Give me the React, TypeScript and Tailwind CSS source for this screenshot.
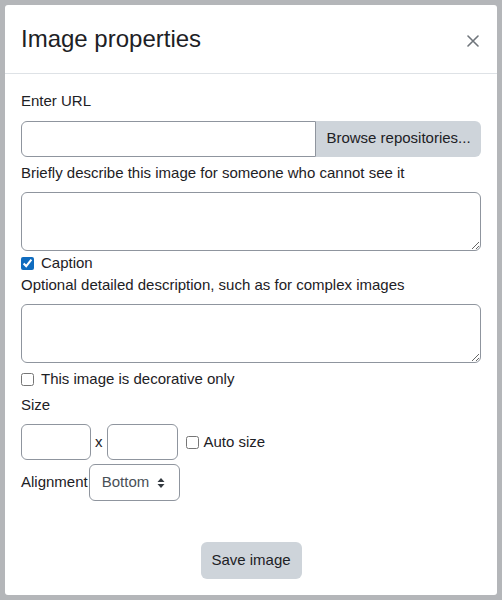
import React from "react";

export default function App() {
  return (
    <div
      className="w-[502px] h-[600px] bg-[#b4b6b9] p-[5px] overflow-hidden"
      style={{ fontFamily: '"Liberation Sans", Arial, sans-serif' }}
    >
      <div className="w-[492px] h-[590px] bg-white rounded-[3px] flex flex-col text-[#1d2125] text-[15px] leading-[22.5px]">
        {/* Header */}
        <div className="h-[69px] border-b border-[#dee2e6] flex items-center justify-between pl-[16px] pr-[17px]">
          <h5 className="text-[24px] leading-[28px] font-normal">Image properties</h5>
          <button className="w-[14px] h-[14px] flex items-center justify-center mt-[4px]">
            <svg width="12" height="12" viewBox="0 0 12 12">
              <path d="M1 1L11 11M11 1L1 11" stroke="#6f757b" strokeWidth="1.6" strokeLinecap="round" />
            </svg>
          </button>
        </div>

        {/* Body */}
        <div className="flex-1 flex flex-col px-[16px] pt-[16px]">
          <label className="mb-[8px]">Enter URL</label>
          <div className="flex h-[36px]">
            <input
              type="text"
              className="flex-1 min-w-0 border border-[#8f959e] rounded-l-[6px] px-[12px] outline-none"
            />
            <button className="w-[165px] shrink-0 bg-[#ced4da] rounded-r-[6px] text-center text-[#1d2125] whitespace-nowrap">
              Browse repositories...
            </button>
          </div>

          <label className="mt-[5px] mb-[8px]">Briefly describe this image for someone who cannot see it</label>
          <textarea
            rows={2}
            className="h-[59px] border border-[#8f959e] rounded-[6px] px-[12px] py-[6px] outline-none resize-y"
          />

          <label className="flex items-center gap-[7px] h-[23px] mt-[1px]">
            <input type="checkbox" defaultChecked className="w-[13px] h-[13px] m-0 accent-[#0f6cbf]" />
            <span>Caption</span>
          </label>

          <label className="mb-[7px] -mt-[1px]">Optional detailed description, such as for complex images</label>
          <textarea
            rows={2}
            className="h-[59px] border border-[#8f959e] rounded-[6px] px-[12px] py-[6px] outline-none resize-y"
          />

          <label className="flex items-center gap-[7px] h-[23px] mt-[5px]">
            <input type="checkbox" className="w-[13px] h-[13px] m-0 accent-[#0f6cbf]" />
            <span>This image is decorative only</span>
          </label>

          <label className="mt-[3px] mb-[8px]">Size</label>
          <div className="flex items-center h-[36px]">
            <input
              type="text"
              className="w-[70px] h-[36px] border border-[#8f959e] rounded-[6px] px-[8px] outline-none"
            />
            <span className="mx-[4px]">x</span>
            <input
              type="text"
              className="w-[71px] h-[36px] border border-[#8f959e] rounded-[6px] px-[8px] outline-none"
            />
            <label className="flex items-center gap-[5px] ml-[8px]">
              <input type="checkbox" className="w-[13px] h-[13px] m-0 accent-[#0f6cbf]" />
              <span>Auto size</span>
            </label>
          </div>

          <div className="flex items-center mt-[4px] h-[37px]">
            <span>Alignment</span>
            <div className="relative ml-[1px]">
              <select
                defaultValue="bottom"
                className="appearance-none w-[91px] h-[37px] border border-[#8f959e] rounded-[6px] pl-[12px] pr-[24px] text-[#495057] bg-white outline-none"
              >
                <option value="top">Top</option>
                <option value="middle">Middle</option>
                <option value="bottom">Bottom</option>
              </select>
              <svg
                className="absolute right-[15px] top-[14px] pointer-events-none"
                width="8"
                height="10"
                viewBox="0 0 8 10"
              >
                <path d="M4 0L7.5 4H0.5Z M4 10L0.5 6H7.5Z" fill="#343a40" />
              </svg>
            </div>
          </div>

          <div className="flex justify-center mt-[41px]">
            <button className="bg-[#ced4da] rounded-[6px] w-[101px] h-[37px] text-[#1d2125]">Save image</button>
          </div>
        </div>
      </div>
    </div>
  );
}
